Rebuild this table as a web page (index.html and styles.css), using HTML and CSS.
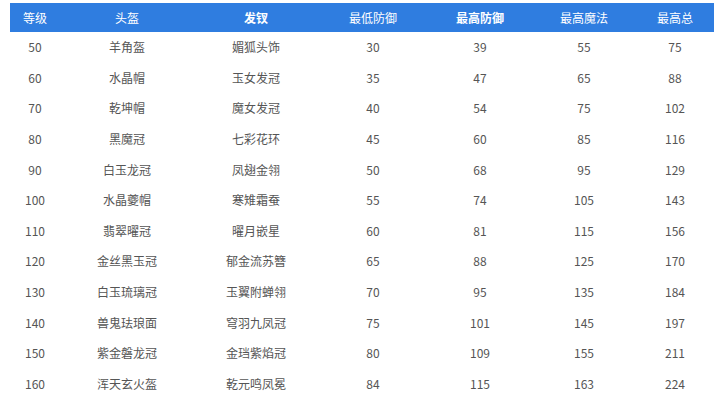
FILE: index.html
```html
<!DOCTYPE html>
<html lang="zh-CN">
<head>
<meta charset="utf-8">
<title>头盔发钗</title>
<link rel="stylesheet" href="styles.css">
</head>
<body>
<table class="data">
  <colgroup>
    <col class="c1"><col class="c2"><col class="c3"><col class="c4"><col class="c5"><col class="c6"><col class="c7">
  </colgroup>
  <thead>
    <tr>
      <th>等级</th><th>头盔</th><th class="strong">发钗</th><th>最低防御</th><th class="strong">最高防御</th><th>最高魔法</th><th>最高总</th>
    </tr>
  </thead>
  <tbody>
    <tr><td>50</td><td>羊角盔</td><td>媚狐头饰</td><td>30</td><td>39</td><td>55</td><td>75</td></tr>
    <tr><td>60</td><td>水晶帽</td><td>玉女发冠</td><td>35</td><td>47</td><td>65</td><td>88</td></tr>
    <tr><td>70</td><td>乾坤帽</td><td>魔女发冠</td><td>40</td><td>54</td><td>75</td><td>102</td></tr>
    <tr><td>80</td><td>黑魔冠</td><td>七彩花环</td><td>45</td><td>60</td><td>85</td><td>116</td></tr>
    <tr><td>90</td><td>白玉龙冠</td><td>凤翅金翎</td><td>50</td><td>68</td><td>95</td><td>129</td></tr>
    <tr><td>100</td><td>水晶夔帽</td><td>寒雉霜蚕</td><td>55</td><td>74</td><td>105</td><td>143</td></tr>
    <tr><td>110</td><td>翡翠曜冠</td><td>曜月嵌星</td><td>60</td><td>81</td><td>115</td><td>156</td></tr>
    <tr><td>120</td><td>金丝黑玉冠</td><td>郁金流苏簪</td><td>65</td><td>88</td><td>125</td><td>170</td></tr>
    <tr><td>130</td><td>白玉琉璃冠</td><td>玉翼附蝉翎</td><td>70</td><td>95</td><td>135</td><td>184</td></tr>
    <tr><td>140</td><td>兽鬼珐琅面</td><td>穹羽九凤冠</td><td>75</td><td>101</td><td>145</td><td>197</td></tr>
    <tr><td>150</td><td>紫金磐龙冠</td><td>金珰紫焰冠</td><td>80</td><td>109</td><td>155</td><td>211</td></tr>
    <tr><td>160</td><td>浑天玄火盔</td><td>乾元鸣凤冕</td><td>84</td><td>115</td><td>163</td><td>224</td></tr>
  </tbody>
</table>
</body>
</html>
```

FILE: styles.css
```css
html, body {
  margin: 0;
  padding: 0;
  background: #ffffff;
}

body {
  padding: 3px 7px 0 10px;
  font-family: "Noto Sans CJK SC", "Noto Sans", sans-serif;
  font-size: 12px;
  color: #555555;
}

.data {
  width: 704px;
  border-collapse: collapse;
  table-layout: fixed;
}

.c1 { width: 50px; }
.c2 { width: 134px; }
.c3 { width: 124px; }
.c4 { width: 110px; }
.c5 { width: 104px; }
.c6 { width: 104px; }
.c7 { width: 78px; }

.data th {
  background: #2f7de0;
  color: #ffffff;
  font-weight: 400;
  height: 29px;
  padding: 0;
  text-align: center;
  line-height: 1;
}

.data th.strong {
  font-weight: 700;
}

.data td {
  height: 30.6px;
  padding: 0;
  text-align: center;
  line-height: 1;
}
```
